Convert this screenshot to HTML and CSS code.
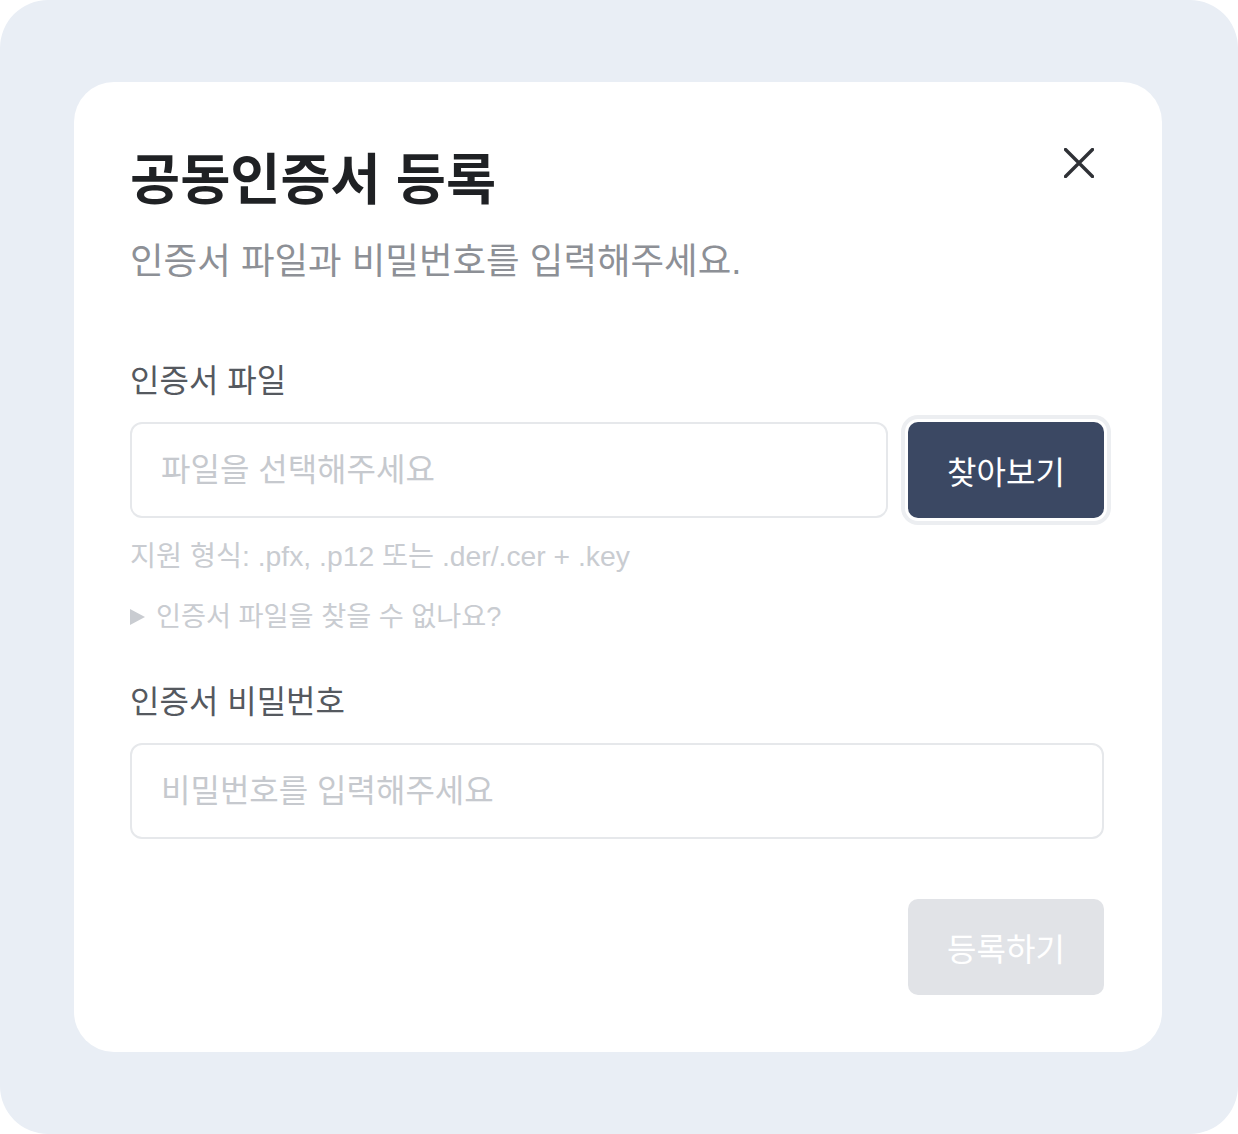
FILE: index.html
```html
<!DOCTYPE html>
<html lang="ko">
  <head>
    <meta charset="utf-8" />
    <title>공동인증서 등록</title>
    <link rel="stylesheet" href="styles.css">
  </head>
  <body>
    <div class="frame">
      <div class="modal">
        <div class="modal-head">
          <div class="modal-heading">
            <h1 class="modal-title">공동인증서 등록</h1>
            <p class="modal-desc">인증서 파일과 비밀번호를 입력해주세요.</p>
          </div>
          <button class="close-btn" type="button" aria-label="닫기">
            <svg width="30" height="30" viewBox="0 0 30 30">
              <path d="M1.5 1.5 L28.5 28.5 M28.5 1.5 L1.5 28.5" stroke="#2f3136" stroke-width="3.4" stroke-linecap="round" fill="none" />
            </svg>
          </button>
        </div>

        <form class="cert-form" onsubmit="return false">
          <div class="form-group first">
            <label class="field-label" for="certFile">인증서 파일</label>
            <div class="file-row">
              <input class="text-input" type="text" id="certFile" placeholder="파일을 선택해주세요" readonly />
              <button class="browse-btn" type="button">찾아보기</button>
            </div>
            <p class="hint">지원 형식: .pfx, .p12 또는 .der/.cer + .key</p>
            <details class="help">
              <summary><span class="arrow"></span>인증서 파일을 찾을 수 없나요?</summary>
            </details>
          </div>

          <div class="form-group second">
            <label class="field-label" for="certPw">인증서 비밀번호</label>
            <input class="text-input" type="password" id="certPw" placeholder="비밀번호를 입력해주세요" />
          </div>

          <div class="form-actions">
            <button class="submit-btn" type="submit" disabled>등록하기</button>
          </div>
        </form>
      </div>
    </div>
  </body>
</html>
```

FILE: styles.css
```css
body {
  margin: 0;
  background: #fff;
  font-family: "Liberation Sans", "Noto Sans CJK KR", sans-serif;
}
.frame {
  width: 1238px;
  height: 1134px;
  box-sizing: border-box;
  padding: 82px 76px 82px 74px;
  background: #e9eef5;
  border-radius: 48px;
}
.modal {
  background: #fff;
  border-radius: 40px;
  padding: 68px 58px 57px 56px;
}

.modal-head {
  display: flex;
  justify-content: space-between;
  align-items: flex-start;
}
.modal-title {
  margin: 0;
  font-size: 54.5px;
  line-height: 62px;
  font-weight: 700;
  color: #1f2124;
}
.modal-desc {
  margin: 28px 0 0;
  font-size: 36.5px;
  line-height: 44px;
  color: #8d9096;
}
.close-btn {
  width: 44px;
  height: 44px;
  margin: -9px 3px 0 0;
  padding: 0;
  border: none;
  background: none;
  display: flex;
  align-items: center;
  justify-content: center;
}

.form-group.first {
  margin-top: 77px;
}
.form-group.second {
  margin-top: 47px;
}
.field-label {
  display: block;
  font-size: 32px;
  line-height: 40px;
  color: #55595f;
  margin-bottom: 21px;
}

.file-row {
  display: flex;
  gap: 20px;
}
.text-input {
  flex: 1;
  width: 100%;
  height: 96px;
  box-sizing: border-box;
  padding: 0 29px;
  border: 2px solid #e6e8eb;
  border-radius: 12px;
  font-family: inherit;
  font-size: 32px;
  color: #333;
  outline: none;
}
.text-input::placeholder {
  color: #c6c9ce;
}

.browse-btn {
  width: 196px;
  height: 96px;
  flex-shrink: 0;
  border: none;
  border-radius: 10px;
  background: #3b4863;
  color: #fff;
  font-family: inherit;
  font-size: 32px;
  box-shadow: 0 0 0 3px #fff, 0 0 0 7px #eceef1;
}

.hint {
  margin: 20px 0 0;
  font-size: 28.3px;
  line-height: 36px;
  color: #c9ccd1;
}
.help {
  margin-top: 25px;
}
.help summary {
  list-style: none;
  display: flex;
  align-items: center;
  font-size: 27.2px;
  line-height: 36px;
  color: #c9ccd1;
}
.help summary::-webkit-details-marker {
  display: none;
}
.arrow {
  width: 0;
  height: 0;
  border-left: 15px solid #c9ccd1;
  border-top: 8px solid transparent;
  border-bottom: 8px solid transparent;
  margin-right: 11px;
}

.form-actions {
  display: flex;
  justify-content: flex-end;
  margin-top: 60px;
}
.submit-btn {
  width: 196px;
  height: 96px;
  border: none;
  border-radius: 10px;
  background: #e1e3e7;
  color: #fff;
  font-family: inherit;
  font-size: 32px;
}
```
